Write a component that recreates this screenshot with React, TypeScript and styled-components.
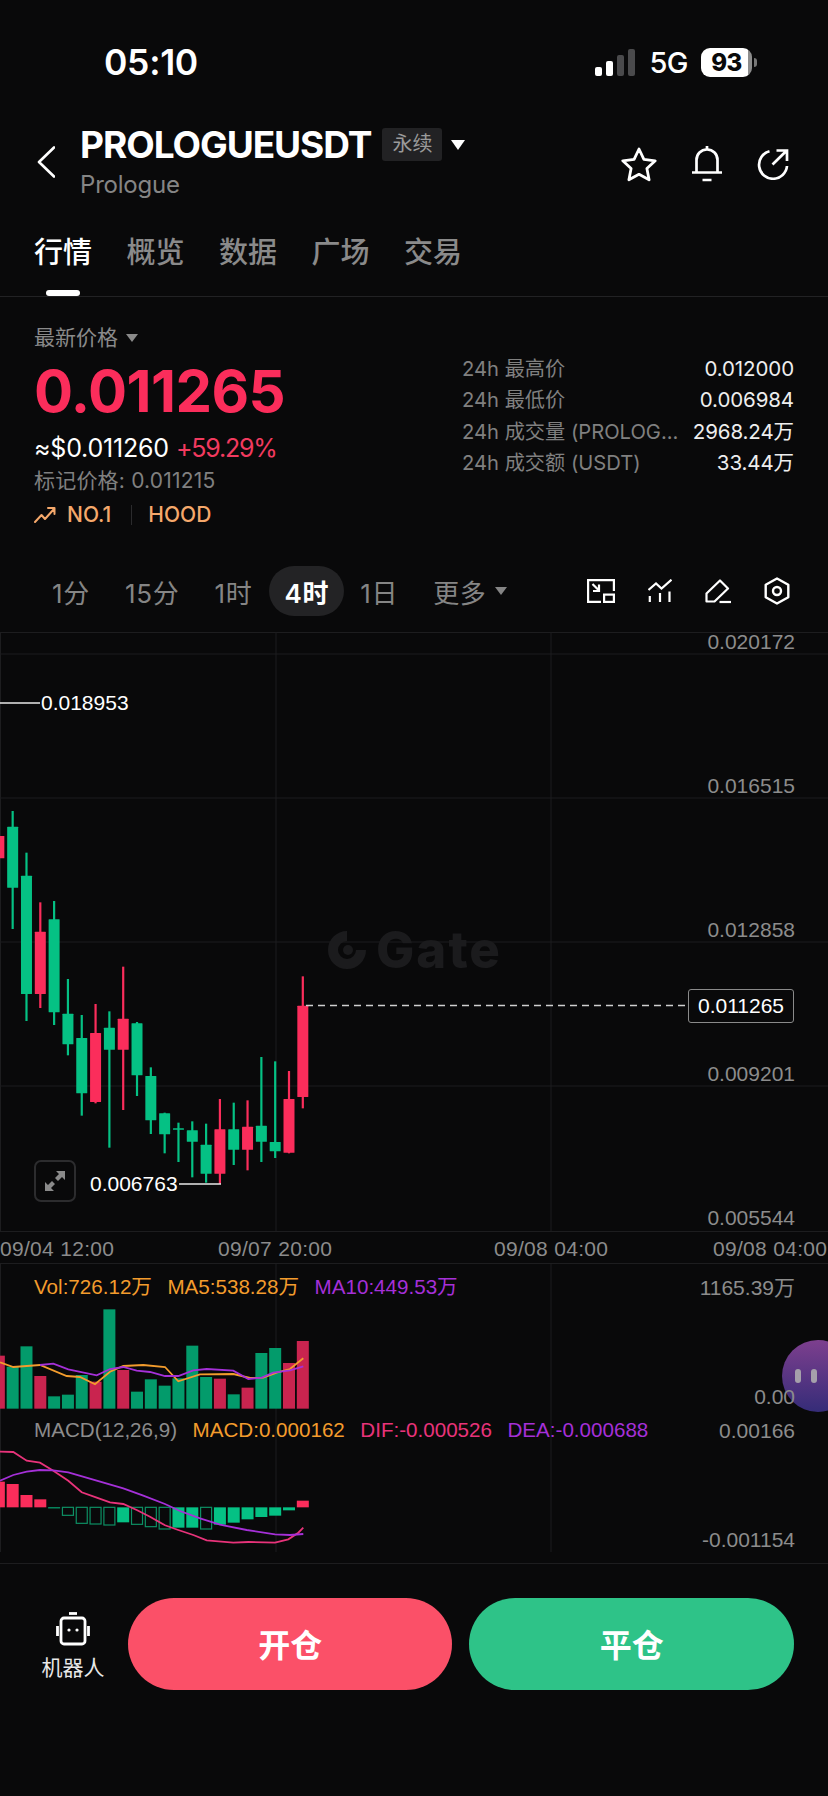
import React from 'react';
import styled, { createGlobalStyle } from 'styled-components';

const SANS = `Inter, "Noto Sans CJK SC", sans-serif`;
const CHART_FONT = `"Liberation Sans", "Noto Sans CJK SC", sans-serif`;
const BG = '#09090a';
const UP = '#fb2d5b';
const DOWN = '#05c184';
const GRID = '#1d1d1f';

const GlobalStyle = createGlobalStyle`
    html, body {
        margin: 0;
        padding: 0;
        background-color: ${BG};
    }
    * {
        box-sizing: border-box;
    }
`;

const Page = styled.div`
    position: relative;
    width: 828px;
    height: 1796px;
    overflow: hidden;
    background-color: ${BG};
    color: #fff;
    font-family: ${SANS};
`;

const StatusBar = styled.div`
    display: flex;
    align-items: center;
    justify-content: space-between;
    height: 36px;
    margin-top: 44px;
    padding: 0 76px 0 104px;
`;

const Clock = styled.div`
    font-size: 35.5px;
    font-weight: 600;
    letter-spacing: -0.3px;
`;

const StatusRight = styled.div`
    display: flex;
    align-items: center;
    gap: 13px;
`;

const Network = styled.span`
    font-size: 29px;
    font-weight: 500;
    letter-spacing: -0.5px;
`;

const Battery = styled.div`
    position: relative;
    width: 51px;
    height: 29px;
    border-radius: 9px;
    background: linear-gradient(90deg, #fff 92%, #8d8d8d 92%);
    color: ${BG};
    font-size: 24px;
    font-weight: 800;
    line-height: 29px;
    letter-spacing: -0.5px;
    text-align: center;

    &::after {
        content: '';
        position: absolute;
        top: 10px;
        right: -5px;
        width: 3px;
        height: 9px;
        border-radius: 0 3px 3px 0;
        background-color: #777;
    }
`;

const Header = styled.div`
    display: flex;
    align-items: center;
    height: 84px;
    margin-top: 40px;
    padding: 0 39px 0 37px;
`;

const TitleBlock = styled.div`
    margin-left: 25px;
    flex: 1;
`;

const TitleRow = styled.div`
    display: flex;
    align-items: center;
    height: 40px;
`;

const Title = styled.div`
    font-size: 37px;
    font-weight: 700;
    letter-spacing: -1.05px;
`;

const Badge = styled.span`
    margin-left: 11px;
    padding: 0 10px;
    height: 33px;
    border-radius: 3px;
    background-color: #222224;
    color: #9a9a9a;
    font-size: 20px;
    line-height: 33px;
`;

const Caret = styled.span<{ $size?: number; $color?: string }>`
    display: inline-block;
    margin-left: ${p => (p.$size ? 8 : 9)}px;
    border-left: ${p => p.$size ?? 7.5}px solid transparent;
    border-right: ${p => p.$size ?? 7.5}px solid transparent;
    border-top: ${p => (p.$size ?? 7.5) * 1.4}px solid ${p => p.$color ?? '#fff'};
`;

const Subtitle = styled.div`
    margin-top: 5px;
    color: #858585;
    font-size: 24px;
    line-height: 30px;
    letter-spacing: -0.2px;
`;

const HeaderActions = styled.div`
    display: flex;
    align-items: center;
    gap: 35px;
    margin-top: 4px;
`;

const Tabs = styled.div`
    display: flex;
    gap: 34.5px;
    height: 66px;
    margin-top: 27px;
    padding: 0 34px;
    border-bottom: 1px solid #222224;
`;

const Tab = styled.div<{ $active?: boolean }>`
    position: relative;
    color: ${p => (p.$active ? '#fff' : '#8a8a8a')};
    font-size: 29px;
    font-weight: 500;
    line-height: 44px;

    &::after {
        content: '';
        display: ${p => (p.$active ? 'block' : 'none')};
        position: absolute;
        left: 12px;
        bottom: 0;
        width: 34px;
        height: 6px;
        border-radius: 3px;
        background-color: #fff;
    }
`;

const PriceSection = styled.div`
    display: flex;
    justify-content: space-between;
    height: 269px;
    padding: 26px 34px 0;
`;

const PriceLeft = styled.div`
    display: flex;
    flex-direction: column;
`;

const PriceType = styled.div`
    display: flex;
    align-items: center;
    color: #8a8a8a;
    font-size: 21px;
    line-height: 30px;
`;

const BigPrice = styled.div`
    margin-top: 8px;
    color: ${UP};
    font-size: 58px;
    font-weight: 700;
    line-height: 60px;
    letter-spacing: -0.55px;
`;

const FiatRow = styled.div`
    display: flex;
    gap: 7px;
    margin-top: 12px;
    font-size: 25px;
    line-height: 30px;
    letter-spacing: -0.2px;
`;

const Change = styled.span`
    color: #f23a5f;
    letter-spacing: -1.2px;
`;

const MarkPrice = styled.div`
    margin-top: 5px;
    color: #808080;
    font-size: 21px;
    line-height: 26px;
    letter-spacing: 0.2px;
`;

const RankRow = styled.div`
    display: flex;
    align-items: center;
    margin-top: 8px;
    color: #f5a86b;
    font-size: 21px;
    font-weight: 500;
    line-height: 26px;
`;

const RankLabel = styled.span`
    margin-left: 11px;
`;

const RankDivider = styled.span`
    width: 1px;
    height: 20px;
    margin: 0 16px 0 20px;
    background-color: #2b2b2d;
`;

const Stats = styled.div`
    width: 332px;
    padding-top: 30px;
`;

const StatRow = styled.div`
    display: flex;
    justify-content: space-between;
    height: 31.3px;
    font-size: 20.2px;
    line-height: 31.3px;
`;

const StatLabel = styled.span`
    color: #808080;
`;

const StatValue = styled.span`
    color: #eee;
    font-size: 20.5px;
    letter-spacing: -0.1px;
`;

const IntervalBar = styled.div`
    display: flex;
    align-items: center;
    gap: 3px;
    height: 50px;
    margin-bottom: 16px;
    padding: 0 38px 0 36px;
`;

const Interval = styled.div<{ $active?: boolean }>`
    display: flex;
    align-items: center;
    height: 50px;
    margin: ${p => (p.$active ? '0 -3px 0 -2px' : '0')};
    padding: 0 ${p => (p.$active ? 15 : 16)}px;
    border-radius: 25px;
    background-color: ${p => (p.$active ? '#232325' : 'transparent')};
    color: ${p => (p.$active ? '#fff' : '#858585')};
    font-size: 26px;
    font-weight: ${p => (p.$active ? 600 : 400)};
    letter-spacing: 0.7px;
`;

const ToolIcons = styled.div`
    display: flex;
    align-items: center;
    gap: 33px;
    margin-left: auto;
`;

const ChartPanel = styled.div<{ $height: number }>`
    position: relative;
    height: ${p => p.$height}px;
    font-family: ${CHART_FONT};
`;

const PanelSvg = styled.svg`
    position: absolute;
    left: 0;
    top: 0;
    display: block;
`;

const AxisLabel = styled.div<{ $top: number }>`
    position: absolute;
    right: 33px;
    top: ${p => p.$top}px;
    color: #8c8c8c;
    font-size: 21px;
    line-height: 24px;
`;

const PriceMark = styled.div<{ $top: number; $left: number }>`
    position: absolute;
    left: ${p => p.$left}px;
    top: ${p => p.$top}px;
    color: #fff;
    font-size: 21px;
    line-height: 24px;
`;

const LastPriceBox = styled.div`
    position: absolute;
    left: 688px;
    top: 357px;
    width: 106px;
    height: 34px;
    border: 1px solid #8a8a8a;
    border-radius: 3px;
    background-color: ${BG};
    color: #fff;
    font-size: 21px;
    line-height: 32px;
    text-align: center;
`;

const Watermark = styled.div`
    position: absolute;
    left: 328px;
    top: 296px;
    display: flex;
    align-items: center;
    gap: 10px;
    color: #1b1b1d;
    font-family: ${SANS};
    font-size: 51px;
    font-weight: 800;
    line-height: 44px;
    letter-spacing: 2px;
`;

const ExpandButton = styled.div`
    position: absolute;
    left: 34px;
    top: 528px;
    display: flex;
    align-items: center;
    justify-content: center;
    width: 42px;
    height: 42px;
    border: 2px solid #2c2c2e;
    border-radius: 7px;
`;

const TimeAxis = styled.div`
    display: grid;
    grid-template-columns: 218px 276px 219px 115px;
    height: 32px;
    border-bottom: 1px solid ${GRID};
    color: #8c8c8c;
    font-family: ${CHART_FONT};
    font-size: 21px;
    line-height: 33px;
    letter-spacing: 0.3px;
    white-space: nowrap;
`;

const Legend = styled.div<{ $top: number }>`
    position: absolute;
    left: 34px;
    top: ${p => p.$top}px;
    display: flex;
    gap: 15.5px;
    font-size: 20.6px;
    line-height: 24px;
    white-space: nowrap;
`;

const LegendItem = styled.span<{ $color: string }>`
    color: ${p => p.$color};
`;

const FloatBubble = styled.div`
    position: absolute;
    left: 782px;
    top: 1340px;
    display: flex;
    gap: 10px;
    align-items: center;
    justify-content: flex-start;
    width: 72px;
    height: 72px;
    padding-left: 13px;
    border-radius: 50%;
    background: linear-gradient(180deg, #7d3f8e 0%, #352c78 100%);
`;

const BubbleEye = styled.span`
    width: 6px;
    height: 14px;
    border-radius: 3px;
    background-color: #a5a0ab;
`;

const BottomBar = styled.div`
    display: flex;
    align-items: center;
    height: 92px;
    margin-top: 34px;
    padding: 0 34px 0 32px;
`;

const RobotLink = styled.div`
    display: flex;
    flex-direction: column;
    align-items: center;
    gap: 8px;
    width: 82px;
    margin-top: 5px;
    margin-right: 14px;
    color: #e8e8e8;
    font-size: 21px;
    line-height: 28px;
`;

const TradeButton = styled.div<{ $color: string }>`
    display: flex;
    align-items: center;
    justify-content: center;
    width: 325px;
    height: 92px;
    padding-bottom: 3px;
    border-radius: 46px;
    background-color: ${p => p.$color};
    color: #fff;
    font-size: 32px;
    font-weight: 700;
`;

const ButtonGap = styled.div`
    width: 17px;
`;

type Candle = [boolean, number, number, number, number];

// values are read off the 3x crop: up?, wickTop, bodyTop, bodyBottom, wickBottom
const candles: Candle[] = [
    [true, 168, 168, 235, 235],
    [false, 93, 140, 323, 447],
    [false, 218, 287, 642, 723],
    [true, 367, 455, 642, 684],
    [false, 363, 418, 697, 735],
    [false, 597, 701, 793, 826],
    [false, 705, 774, 940, 1007],
    [true, 672, 759, 966, 970],
    [false, 694, 743, 809, 1103],
    [true, 560, 716, 809, 990],
    [false, 726, 730, 886, 948],
    [false, 862, 888, 1021, 1062],
    [false, 998, 1000, 1063, 1120],
    [false, 1028, 1045, 1049, 1146],
    [false, 1024, 1051, 1085, 1192],
    [false, 1031, 1094, 1181, 1208],
    [true, 957, 1048, 1181, 1212],
    [false, 968, 1048, 1109, 1155],
    [true, 961, 1040, 1109, 1171],
    [false, 831, 1037, 1085, 1146],
    [false, 844, 1086, 1114, 1134],
    [true, 873, 957, 1118, 1120],
    [true, 589, 677, 951, 985],
];

const barX = (i: number) => (38 + 41.45 * (i - 1)) / 3;
const candleY = (v: number) => 780 + v / 3;
const lowerY = (v: number) => 1230 + v / 3;

const volumes: [boolean, number][] = [
    [true, 377], [false, 410], [false, 349], [true, 438], [false, 499], [false, 494],
    [false, 435], [true, 455], [false, 238], [true, 420], [false, 485], [false, 448],
    [false, 467], [false, 445], [false, 347], [false, 441], [true, 446], [false, 493],
    [true, 473], [false, 369], [false, 354], [true, 399], [true, 333],
];

// MACD histogram: bar end, hollow?
const histogram: [number, boolean][] = [
    [755, false], [762, false], [795, false], [808, false], [835, false], [856, true],
    [880, true], [882, true], [885, true], [877, false], [883, true], [890, true],
    [897, true], [893, false], [893, false], [897, true], [884, false], [878, false],
    [868, false], [861, false], [857, false], [841, false], [812, false],
];

const toPoints = (pts: number[][]) =>
    pts.map(([x, y]) => `${(x / 3).toFixed(1)},${lowerY(y).toFixed(1)}`).join(' ');

const maFast = [[0, 397], [40, 411], [120, 405], [200, 438], [240, 441], [285, 463], [330, 425], [370, 408], [430, 405], [495, 411], [535, 454], [600, 433], [700, 432], [750, 444], [790, 443], [830, 428], [870, 417], [910, 385]];
const maSlow = [[120, 405], [160, 401], [205, 418], [290, 436], [330, 417], [370, 411], [410, 422], [450, 426], [495, 438], [535, 438], [580, 421], [620, 417], [700, 422], [745, 447], [785, 443], [820, 428], [870, 421], [910, 409]];
const dif = [[0, 665], [40, 666], [80, 692], [120, 698], [160, 722], [205, 752], [245, 787], [290, 803], [330, 817], [370, 822], [410, 840], [450, 860], [495, 886], [535, 900], [580, 915], [620, 931], [700, 938], [745, 936], [825, 938], [865, 928], [895, 908], [910, 893]];
const dea = [[0, 752], [40, 735], [80, 725], [120, 720], [160, 721], [205, 727], [290, 752], [370, 775], [430, 797], [495, 822], [540, 843], [600, 865], [660, 884], [740, 900], [825, 913], [870, 915], [910, 912]];

function GridLines({ top, bottom, rows = [] }: { top: number; bottom: number; rows?: number[] }) {
    return (
        <g stroke={GRID} strokeWidth="1">
            {[0.5, 276, 551].map(x => (
                <line key={x} x1={x} x2={x} y1={top} y2={bottom} />
            ))}
            {rows.map(y => (
                <line key={y} x1="0" x2="828" y1={y} y2={y} />
            ))}
        </g>
    );
}

function StatusSignal() {
    return (
        <svg width="41" height="27" viewBox="0 0 41 27">
            <rect x="0" y="18" width="7" height="9" rx="2" fill="#fff" />
            <rect x="11" y="12" width="7" height="15" rx="2" fill="#fff" />
            <rect x="22" y="6" width="7" height="21" rx="2" fill="#4a4a4c" />
            <rect x="33" y="0" width="7" height="27" rx="2" fill="#4a4a4c" />
        </svg>
    );
}

function BackIcon() {
    return (
        <svg width="18" height="32" viewBox="0 0 18 32" fill="none" stroke="#fff" strokeWidth="2.6" strokeLinecap="round" strokeLinejoin="round">
            <path d="M17 1.5 2 16l15 14.5" />
        </svg>
    );
}

function StarIcon() {
    return (
        <svg width="36" height="35" viewBox="0 0 36 35" fill="none" stroke="#fff" strokeWidth="2.8" strokeLinejoin="round">
            <path d="M18 2l4.9 10.4 11.3 1.4-8.3 7.8 2.2 11.2L18 27.3 7.900 32.8l2.2-11.2-8.3-7.8 11.3-1.4z" />
        </svg>
    );
}

function BellIcon() {
    return (
        <svg width="30" height="36" viewBox="0 0 30 36" fill="none" stroke="#fff" strokeWidth="2.7" strokeLinejoin="round">
            <path d="M0 26.5h30M4.5 26.5V14C4.5 8 9 3.5 15 3.5S25.5 8 25.5 14v12.5" />
            <path d="M15 0v4M10.5 34h9" />
        </svg>
    );
}

function ShareIcon() {
    return (
        <svg width="32" height="31" viewBox="0 0 32 31" fill="none" stroke="#fff" strokeWidth="2.7">
            <path d="M12.5 2.2A14 14 0 1 0 30 17" />
            <path d="M15.5 15.5 29.5 1.8M19.5 1.5H30V12" />
        </svg>
    );
}

function TrendIcon() {
    return (
        <svg width="22" height="18" viewBox="0 0 22 18" fill="none" stroke="#f5a86b" strokeWidth="2" strokeLinecap="round" strokeLinejoin="round">
            <path d="M1 16l6.5-7 3.5 4L20 3M14 2h6.5v6" />
        </svg>
    );
}

function LayoutIcon() {
    return (
        <svg width="28" height="24" viewBox="0 0 28 24" fill="none" stroke="#fff" strokeWidth="2.2">
            <path d="M14 22.9H1.1V1.1h25.8V12" />
            <path d="M5.5 5 12 11.5M12 5.5V12H6" />
            <rect x="17.1" y="15.6" width="9.8" height="7.3" />
        </svg>
    );
}

function IndicatorIcon() {
    return (
        <svg width="24" height="24" viewBox="0 0 24 24" fill="none" stroke="#fff" strokeWidth="2.2">
            <path d="M0.5 11 8 4.5l5.5 5L23.5 0.7" />
            <path d="M1.8 17v6M12 14v9M21.5 12.5V23" />
        </svg>
    );
}

function PenIcon() {
    return (
        <svg width="26" height="25" viewBox="0 0 26 25" fill="none" stroke="#fff" strokeWidth="2.2" strokeLinejoin="round">
            <path d="M15 1.5 23 9.5 9.5 22.5H1.5V14.5z" />
            <path d="M14.5 23h11.5" />
        </svg>
    );
}

function SettingsIcon() {
    return (
        <svg width="26" height="28" viewBox="0 0 26 28" fill="none" stroke="#fff" strokeWidth="2.4" strokeLinejoin="round">
            <path d="M13 1.5 24.3 7.8v12.4L13 26.5 1.7 20.2V7.8z" />
            <circle cx="13" cy="14" r="4" />
        </svg>
    );
}

function ExpandIcon() {
    return (
        <svg width="22" height="22" viewBox="0 0 22 22" fill="#8a8a8a">
            <path d="M12 1h9v9l-3-3-4 4-3-3 4-4zM10 21H1v-9l3 3 4-4 3 3-4 4z" />
        </svg>
    );
}

function GateMark() {
    return (
        <svg width="38" height="40" viewBox="0 0 38 40" fill="none">
            <path d="M19 6a14 14 0 1 0 14 14" stroke="#1b1b1d" strokeWidth="10" />
            <circle cx="20" cy="20" r="5" fill="#1b1b1d" />
        </svg>
    );
}

function RobotIcon() {
    return (
        <svg width="34" height="34" viewBox="0 0 34 34" fill="none" stroke="#fff" strokeWidth="2.8">
            <path d="M13 1.5h8" />
            <rect x="5" y="6" width="24" height="26" rx="3" />
            <path d="M1.5 14v10M32.5 14v10" />
            <circle cx="13" cy="18" r="1.6" fill="#fff" stroke="none" />
            <circle cx="21" cy="18" r="1.6" fill="#fff" stroke="none" />
        </svg>
    );
}

function CandleChart() {
    return (
        <PanelSvg width="828" height="600" viewBox="0 632 828 600">
            <line x1="0" x2="828" y1="632.5" y2="632.5" stroke={GRID} />
            <GridLines top={632} bottom={1232} rows={[654, 798, 942, 1086, 1231.5]} />
            {candles.map(([up, wickTop, bodyTop, bodyBottom, wickBottom], i) => {
                const x = barX(i);
                const color = up ? UP : DOWN;
                return (
                    <g key={i} fill={color}>
                        <rect x={x - 1.1} y={candleY(wickTop)} width="2.2" height={(wickBottom - wickTop) / 3} />
                        <rect x={x - 5.5} y={candleY(bodyTop)} width="11" height={Math.max((bodyBottom - bodyTop) / 3, 1.5)} rx="0.5" />
                    </g>
                );
            })}
            <line x1="306" x2="688" y1="1005.5" y2="1005.5" stroke="#cfcfcf" strokeWidth="1.5" strokeDasharray="7 5" />
            <line x1="0" x2="40" y1="703" y2="703" stroke="#e8e8e8" strokeWidth="1.5" />
            <line x1="179" x2="221" y1="1184" y2="1184" stroke="#e8e8e8" strokeWidth="1.5" />
        </PanelSvg>
    );
}

function VolumeChart() {
    return (
        <PanelSvg width="828" height="153" viewBox="0 1264 828 153">
            <GridLines top={1264} bottom={1417} />
            {volumes.map(([up, top], i) => (
                <rect key={i} x={barX(i) - 6} y={lowerY(top)} width="12" height={(536 - top) / 3} fill={up ? '#c9244f' : '#039b6b'} />
            ))}
            <polyline points={toPoints(maFast)} fill="none" stroke="#f39c2d" strokeWidth="1.8" />
            <polyline points={toPoints(maSlow)} fill="none" stroke="#a530d8" strokeWidth="1.8" />
        </PanelSvg>
    );
}

function MacdChart() {
    return (
        <PanelSvg width="828" height="147" viewBox="0 1417 828 147">
            <GridLines top={1417} bottom={1552} />
            <line x1="0" x2="828" y1="1563.5" y2="1563.5" stroke={GRID} />
            {histogram.map(([end, hollow], i) => {
                const x = barX(i) - 6;
                if (end < 832) {
                    return <rect key={i} x={x} y={lowerY(end)} width="12" height={(832 - end) / 3} fill={UP} />;
                }
                if (hollow) {
                    return <rect key={i} x={x + 0.5} y={lowerY(832)} width="11" height={(end - 832) / 3} fill={BG} stroke="#0d8f63" strokeWidth="1.2" />;
                }
                return <rect key={i} x={x} y={lowerY(832)} width="12" height={Math.max((end - 832) / 3, 1)} fill={DOWN} />;
            })}
            <polyline points={toPoints(dif)} fill="none" stroke="#e8337a" strokeWidth="1.8" />
            <polyline points={toPoints(dea)} fill="none" stroke="#a530d8" strokeWidth="1.8" />
        </PanelSvg>
    );
}

const stats = [
    ['24h 最高价', '0.012000'],
    ['24h 最低价', '0.006984'],
    ['24h 成交量 (PROLOG...', '2968.24万'],
    ['24h 成交额 (USDT)', '33.44万'],
];

const intervals = ['1分', '15分', '1时', '4时', '1日'];

export default function App() {
    return (
        <Page>
            <GlobalStyle />
            <FloatBubble>
                <BubbleEye />
                <BubbleEye />
            </FloatBubble>

            <StatusBar>
                <Clock>05:10</Clock>
                <StatusRight>
                    <StatusSignal />
                    <Network>5G</Network>
                    <Battery>93</Battery>
                </StatusRight>
            </StatusBar>

            <Header>
                <BackIcon />
                <TitleBlock>
                    <TitleRow>
                        <Title>PROLOGUEUSDT</Title>
                        <Badge>永续</Badge>
                        <Caret />
                    </TitleRow>
                    <Subtitle>Prologue</Subtitle>
                </TitleBlock>
                <HeaderActions>
                    <StarIcon />
                    <BellIcon />
                    <ShareIcon />
                </HeaderActions>
            </Header>

            <Tabs>
                <Tab $active>行情</Tab>
                <Tab>概览</Tab>
                <Tab>数据</Tab>
                <Tab>广场</Tab>
                <Tab>交易</Tab>
            </Tabs>

            <PriceSection>
                <PriceLeft>
                    <PriceType>
                        最新价格
                        <Caret $size={6} $color="#8a8a8a" />
                    </PriceType>
                    <BigPrice>0.011265</BigPrice>
                    <FiatRow>
                        <span>≈$0.011260</span>
                        <Change>+59.29%</Change>
                    </FiatRow>
                    <MarkPrice>标记价格: 0.011215</MarkPrice>
                    <RankRow>
                        <TrendIcon />
                        <RankLabel>NO.1</RankLabel>
                        <RankDivider />
                        <span>HOOD</span>
                    </RankRow>
                </PriceLeft>
                <Stats>
                    {stats.map(([label, value]) => (
                        <StatRow key={label}>
                            <StatLabel>{label}</StatLabel>
                            <StatValue>{value}</StatValue>
                        </StatRow>
                    ))}
                </Stats>
            </PriceSection>

            <IntervalBar>
                {intervals.map(item => (
                    <Interval key={item} $active={item === '4时'}>
                        {item}
                    </Interval>
                ))}
                <Interval>
                    更多
                    <Caret $size={6} $color="#858585" />
                </Interval>
                <ToolIcons>
                    <LayoutIcon />
                    <IndicatorIcon />
                    <PenIcon />
                    <SettingsIcon />
                </ToolIcons>
            </IntervalBar>

            <ChartPanel $height={600}>
                <Watermark>
                    <GateMark />
                    Gate
                </Watermark>
                <CandleChart />
                <AxisLabel $top={-2}>0.020172</AxisLabel>
                <AxisLabel $top={142}>0.016515</AxisLabel>
                <AxisLabel $top={286}>0.012858</AxisLabel>
                <AxisLabel $top={430}>0.009201</AxisLabel>
                <AxisLabel $top={574}>0.005544</AxisLabel>
                <PriceMark $left={41} $top={59}>0.018953</PriceMark>
                <PriceMark $left={90} $top={540}>0.006763</PriceMark>
                <LastPriceBox>0.011265</LastPriceBox>
                <ExpandButton>
                    <ExpandIcon />
                </ExpandButton>
            </ChartPanel>

            <TimeAxis>
                <span>09/04 12:00</span>
                <span>09/07 20:00</span>
                <span>09/08 04:00</span>
                <span>09/08 04:00</span>
            </TimeAxis>

            <ChartPanel $height={153}>
                <VolumeChart />
                <Legend $top={11}>
                    <LegendItem $color="#f39c2d">Vol:726.12万</LegendItem>
                    <LegendItem $color="#f39c2d">MA5:538.28万</LegendItem>
                    <LegendItem $color="#a530d8">MA10:449.53万</LegendItem>
                </Legend>
                <AxisLabel $top={12}>1165.39万</AxisLabel>
                <AxisLabel $top={121}>0.00</AxisLabel>
            </ChartPanel>

            <ChartPanel $height={147}>
                <MacdChart />
                <Legend $top={1}>
                    <LegendItem $color="#8c8c8c">MACD(12,26,9)</LegendItem>
                    <LegendItem $color="#f39c2d">MACD:0.000162</LegendItem>
                    <LegendItem $color="#e8337a">DIF:-0.000526</LegendItem>
                    <LegendItem $color="#a530d8">DEA:-0.000688</LegendItem>
                </Legend>
                <AxisLabel $top={2}>0.00166</AxisLabel>
                <AxisLabel $top={111}>-0.001154</AxisLabel>
            </ChartPanel>

            <BottomBar>
                <RobotLink>
                    <RobotIcon />
                    机器人
                </RobotLink>
                <TradeButton $color="#fb5068">开仓</TradeButton>
                <ButtonGap />
                <TradeButton $color="#2ec388">平仓</TradeButton>
            </BottomBar>
        </Page>
    );
}
